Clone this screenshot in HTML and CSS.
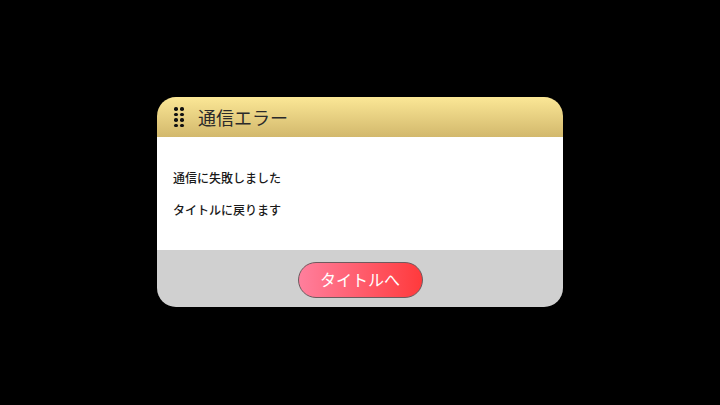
FILE: index.html
```html
<!DOCTYPE html>
<html lang="ja">
<head>
<meta charset="utf-8">
<link rel="stylesheet" href="styles.css">
</head>
<body>
<div class="screen">
  <div class="dialog">
    <div class="header">
      <div class="grip">
        <span></span><span></span><span></span><span></span>
        <span></span><span></span><span></span><span></span>
      </div>
      <div class="title">通信エラー</div>
    </div>
    <div class="body">
      <p class="line">通信に失敗しました</p>
      <p class="line">タイトルに戻ります</p>
    </div>
    <div class="footer">
      <button class="btn">タイトルへ</button>
    </div>
  </div>
</div>
</body>
</html>
```
FILE: styles.css
```css
html, body {
  margin: 0;
  padding: 0;
  background: #000;
}
.screen {
  width: 720px;
  height: 405px;
  display: flex;
  justify-content: center;
  align-items: flex-start;
  padding-top: 97px;
  box-sizing: border-box;
  font-family: "Noto Sans CJK JP", "Noto Sans", sans-serif;
}
.dialog {
  width: 406px;
  margin-left: -0px;
  border-radius: 19px;
  overflow: hidden;
  display: flex;
  flex-direction: column;
}
.header {
  height: 40px;
  background: linear-gradient(#fbe796, #d2b86c);
  display: flex;
  align-items: center;
  padding-left: 17px;
  box-sizing: border-box;
}
.grip {
  display: grid;
  grid-template-columns: 3px 3px;
  grid-auto-rows: 3px;
  column-gap: 3px;
  row-gap: 2.5px;
}
.grip span {
  width: 3.5px;
  height: 3.5px;
  background: #111;
  border-radius: 50%;
}
.title {
  margin-left: 15px;
  font-size: 18px;
  font-weight: 400;
  color: #2a2a2a;
  line-height: 1;
  margin-top: -1px;
}
.body {
  background: #fff;
  height: 113px;
  padding: 33px 0 0 16px;
  box-sizing: border-box;
}
.line {
  margin: 0 0 16px 0;
  font-size: 12px;
  font-weight: 500;
  line-height: 16px;
  color: #1a1a1a;
}
.footer {
  background: #d0d0d0;
  height: 57px;
  display: flex;
  justify-content: center;
  padding-top: 12px;
  box-sizing: border-box;
}
.btn {
  width: 125px;
  height: 36px;
  border-radius: 18px;
  border: 1.5px solid #6e5a5e;
  background: linear-gradient(90deg, #ff7f9d, #ff3a3c);
  color: #fff;
  font-family: "Noto Sans CJK JP", "Noto Sans", sans-serif;
  font-size: 16px;
  padding: 0 0 2px 0;
  margin-left: 0;
}
```
